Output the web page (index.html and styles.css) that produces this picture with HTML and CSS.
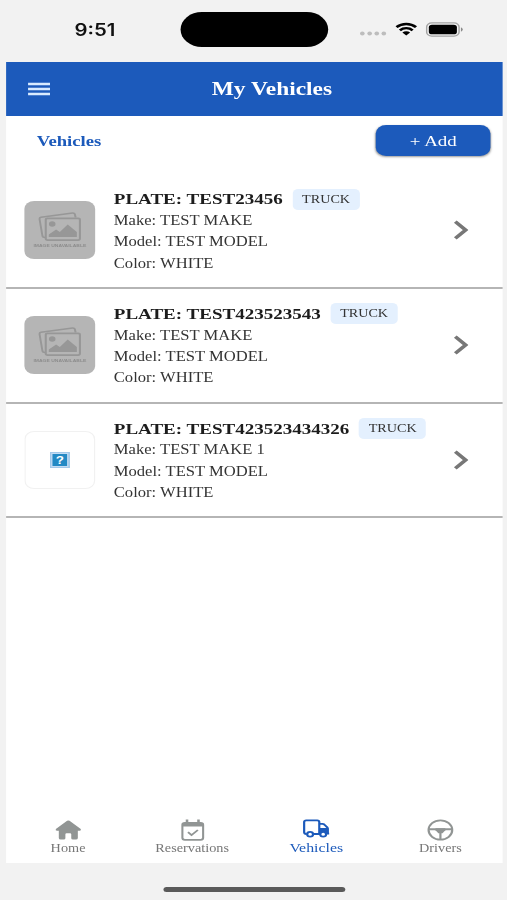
FILE: index.html
```html
<!DOCTYPE html>
<html lang="en">
<head>
  <meta charset="UTF-8">
  <meta name="viewport" content="width=device-width, initial-scale=1.0">
  <title>My Vehicles</title>
  <link rel="stylesheet" href="styles.css">
</head>
<body>
  <!-- Shared chevron and placeholder for vehicles without a photo -->
  <svg class="symbols">
    <symbol id="no-image" viewBox="0 0 58 58">
      <path d="M17 36.5 L15.9 36.2 Q15 36 14.8 35 L12.4 18 Q12.3 16.6 13.6 16.3 L39.5 12 Q41 11.9 41.3 13 L42 16.5" fill="none" stroke="#979797" stroke-width="1.6"/>
      <rect x="17.5" y="17.3" width="28" height="21.8" rx="1.5" fill="none" stroke="#979797" stroke-width="1.7"/>
      <circle cx="22.8" cy="23" r="2.7" fill="#979797"/>
      <path d="M20 36 V33.5 L26 28.5 L29 31 L35.5 23.5 L43 31 V36 Z" fill="#979797"/>
    </symbol>
    <symbol id="chevron" viewBox="0 0 12 20">
      <path d="M1.2 1.7 L9.7 10 L1.2 18.3" fill="none" stroke="#777" stroke-width="3.2"/>
    </symbol>
  </svg>

  <div class="phone">
    <div class="status-bar">
      <span class="time">9:51</span>
      <div class="island"></div>
      <div class="status-icons">
        <svg class="signal" width="22" height="5" viewBox="0 0 22 5" fill="#bdbdbd">
          <circle cx="2" cy="2.5" r="1.9"/><circle cx="8" cy="2.5" r="1.9"/><circle cx="13.8" cy="2.5" r="1.9"/><circle cx="19.6" cy="2.5" r="1.9"/>
        </svg>
        <svg class="wifi" width="18" height="14" viewBox="0 0 18 14">
          <path d="M1 5.2 A11.5 11.5 0 0 1 17 5.2 M3.8 8.3 A7.4 7.4 0 0 1 14.2 8.3" fill="none" stroke="#000" stroke-width="2.4"/>
          <path d="M9 13.6 L5.8 10.5 A4.5 4.5 0 0 1 12.2 10.5 Z"/>
        </svg>
        <svg class="battery" width="31" height="15" viewBox="0 0 31 15">
          <rect x=".7" y=".9" width="26.6" height="13.2" rx="4.2" fill="none" stroke="#a3a3a3" stroke-width="1.2"/>
          <rect x="2.5" y="2.7" width="23" height="9.6" rx="2.6"/>
          <path d="M28.8 5.2 Q30.3 6 30.3 7.5 T28.8 9.8 Z" fill="#8a8a8a"/>
        </svg>
      </div>
    </div>

    <div class="app">
      <header class="header">
        <svg class="menu-icon" width="18" height="14" viewBox="0 0 18 14" stroke="#d9ebff" stroke-width="2.5">
          <path d="M0 2 H18 M0 7 H18 M0 12 H18"/>
        </svg>
        <h1>My Vehicles</h1>
      </header>

      <div class="toolbar">
        <h2>Vehicles</h2>
        <button type="button" class="add-btn">+ Add</button>
      </div>

      <div class="vehicle-list">
        <div class="vehicle">
          <div class="thumb">
            <svg width="58" height="58"><use href="#no-image"/></svg>
            <span class="no-image-text">IMAGE UNAVAILABLE</span>
          </div>
          <div class="info">
            <div class="plate"><strong>PLATE: TEST23456</strong><span class="badge">TRUCK</span></div>
            <p>Make: TEST MAKE</p>
            <p>Model: TEST MODEL</p>
            <p>Color: WHITE</p>
          </div>
          <svg class="chevron"><use href="#chevron"/></svg>
        </div>

        <div class="vehicle">
          <div class="thumb">
            <svg width="58" height="58"><use href="#no-image"/></svg>
            <span class="no-image-text">IMAGE UNAVAILABLE</span>
          </div>
          <div class="info">
            <div class="plate"><strong>PLATE: TEST423523543</strong><span class="badge">TRUCK</span></div>
            <p>Make: TEST MAKE</p>
            <p>Model: TEST MODEL</p>
            <p>Color: WHITE</p>
          </div>
          <svg class="chevron"><use href="#chevron"/></svg>
        </div>

        <div class="vehicle">
          <div class="thumb broken"><span>?</span></div>
          <div class="info">
            <div class="plate"><strong>PLATE: TEST423523434326</strong><span class="badge">TRUCK</span></div>
            <p>Make: TEST MAKE 1</p>
            <p>Model: TEST MODEL</p>
            <p>Color: WHITE</p>
          </div>
          <svg class="chevron"><use href="#chevron"/></svg>
        </div>
      </div>

      <nav class="tabs">
        <div class="tab">
          <svg width="22" height="22" viewBox="0 0 22 22" fill="#919594">
            <path d="M11 1.4 Q11.5 1.4 12 1.8 L21.2 10 Q21.9 11.7 20.3 11.8 H18.8 V19 Q18.8 20.6 17.2 20.6 H14.8 Q13.4 20.6 13.4 19.2 V15.2 Q13.4 14.2 12.4 14.2 H9.6 Q8.6 14.2 8.6 15.2 V19.2 Q8.6 20.6 7.2 20.6 H4.8 Q3.2 20.6 3.2 19 V11.8 H1.7 Q.1 11.7 .8 10 L10 1.8 Q10.5 1.4 11 1.4 Z"/>
          </svg>
          <span>Home</span>
        </div>
        <div class="tab">
          <svg width="22" height="22" viewBox="0 0 22 22" fill="none" stroke="#919594" stroke-width="1.7">
            <rect x="2.5" y="3.8" width="17" height="17" rx="2"/>
            <path d="M2.5 4 H19.5 V7.4 H2.5 Z" fill="#919594" stroke="none"/>
            <path d="M6.3 .5 V5 M15.7 .5 V5" stroke-width="2.1"/>
            <path d="M7.1 13.1 L10 16 L15.2 11"/>
          </svg>
          <span>Reservations</span>
        </div>
        <div class="tab active">
          <svg width="22" height="22" viewBox="0 0 22 22" fill="none" stroke="#1c5abb" stroke-width="1.8">
            <path d="M3.4 15 H3 Q1.3 15 1.3 13.3 V3.1 Q1.3 1.4 3 1.4 H12 Q13.7 1.4 13.7 3.1 V15 H9"/>
            <path d="M13.7 4.9 H16.3 Q17.2 4.9 17.8 5.5 L20.2 8.3 Q20.7 9 20.7 9.8 V15" />
            <path d="M13.7 9 H21 V13.8 H22 V15.5 H13.7 Z" fill="#1c5abb" stroke="none"/>
            <circle cx="6.2" cy="15.2" r="2.4" fill="#fff"/>
            <circle cx="16.9" cy="15.2" r="2.4" fill="#fff"/>
          </svg>
          <span>Vehicles</span>
        </div>
        <div class="tab">
          <svg width="22" height="22" viewBox="0 0 22 22" fill="none" stroke="#919594" stroke-width="1.8">
            <circle cx="11" cy="11" r="9.7"/>
            <path d="M1.5 10.2 H20.5" stroke-width="2"/>
            <path d="M11 12 V20.5"/>
            <path d="M7 9.3 H15 V11.2 L12.7 14.2 H9.3 L7 11.2 Z" fill="#919594" stroke="none"/>
          </svg>
          <span>Drivers</span>
        </div>
      </nav>
    </div>

    <div class="home-indicator"></div>
  </div>
</body>
</html>
```
FILE: styles.css
```css
* {
  box-sizing: border-box;
}

body {
  margin: 0;
  height: 900px;
  overflow: hidden;
  background-color: #f2f2f2;
  font-family: "Liberation Serif", "Times New Roman", serif;
  color: #333;
}

h1, h2, p {
  margin: 0;
}

.symbols {
  display: block;
  width: 0;
  height: 0;
}

/* The screen is wider than its layout, everything stretches sideways */
.phone {
  display: flex;
  flex-direction: column;
  align-items: center;
  width: 416.8px;
  height: 900px;
  transform: scaleX(1.22);
  transform-origin: 0 0;
}

.status-bar {
  display: grid;
  grid-template-columns: 1fr 121px 1fr;
  align-items: center;
  width: 100%;
  height: 62px;
  padding-bottom: 3px;
}

.time {
  padding-left: 61px;
  font-family: Inter, "Liberation Sans", sans-serif;
  font-size: 16.7px;
  font-weight: 600;
  color: #111;
}

.island {
  height: 35px;
  border-radius: 18px;
  background: #000;
}

.status-icons {
  display: flex;
  align-items: center;
  padding-left: 26px;
}

.signal {
  margin-top: 8px;
}

.wifi {
  margin-top: -1px;
  margin-left: 7.3px;
}

.battery {
  margin-top: -1px;
  margin-left: 7.3px;
}

.app {
  display: flex;
  flex-direction: column;
  width: 407px;
  height: 801px;
  background: #fff;
}

.header {
  display: grid;
  grid-template-columns: 60px 1fr 60px;
  align-items: center;
  height: 53.5px;
  background: #1c5abb;
}

.menu-icon {
  margin-left: 18px;
}

.header h1 {
  padding-left: 29px;
  text-align: center;
  font-size: 19.2px;
  color: #fff;
}

.toolbar {
  display: flex;
  justify-content: space-between;
  align-items: center;
  height: 58.5px;
  padding: 0 9.5px 8px 25.2px;
}

.toolbar h2 {
  font-size: 15.3px;
  color: #1c5abb;
}

.add-btn {
  width: 94.5px;
  height: 31px;
  padding: 0;
  border: none;
  border-radius: 8.5px;
  background: #1c5abb;
  box-shadow: 0 1px 2px rgba(0, 0, 0, 0.4);
  font-family: inherit;
  font-size: 15.5px;
  color: #fff;
}

.vehicle {
  display: flex;
  align-items: center;
  height: 114.8px;
  padding: 0 28px 0 15.2px;
  border-bottom: 2px solid #b5b5b5;
}

.thumb {
  position: relative;
  flex: none;
  width: 58px;
  height: 58px;
  border-radius: 8px;
  background: #b5b5b5;
}

.no-image-text {
  position: absolute;
  top: 42px;
  left: 0;
  width: 100%;
  font: bold 4.1px/6px "Liberation Sans", Arial, sans-serif;
  text-align: center;
  color: #8d8d8d;
}

.broken {
  display: flex;
  justify-content: center;
  align-items: center;
  background: #fff;
  border: 1px solid #f1f1f1;
}

.broken span {
  width: 16px;
  height: 16px;
  border: 2px solid #c4dcf3;
  outline: 1px solid #a3c8e9;
  outline-offset: -1px;
  background: #2389c4;
  font: bold 11px/12px "Liberation Sans", Arial, sans-serif;
  text-align: center;
  color: #fff;
}

.info {
  flex: 1;
  margin-left: 15.2px;
  padding-top: 1.6px;
}

.plate {
  display: flex;
  align-items: center;
  height: 21.5px;
}

.plate strong {
  font-size: 15.6px;
  color: #1c1c1c;
}

.badge {
  width: 55px;
  height: 21px;
  margin-left: 8px;
  border-radius: 4.5px;
  background: #e4f0fe;
  text-align: center;
  font-size: 11.6px;
  line-height: 21px;
}

.info p {
  font-size: 13.6px;
  line-height: 21.4px;
}

.chevron {
  flex: none;
  width: 12px;
  height: 20px;
}

.tabs {
  display: grid;
  grid-template-columns: repeat(4, 1fr);
  height: 44.5px;
  margin-top: auto;
}

.tab {
  display: flex;
  flex-direction: column;
  align-items: center;
  font-size: 11.7px;
  line-height: 15px;
  color: #777;
}

.tab svg {
  flex: none;
}

.tab.active {
  font-size: 13px;
  line-height: 14px;
  color: #1c5abb;
}

.home-indicator {
  width: 149px;
  height: 5px;
  margin-top: 24px;
  border-radius: 3px;
  background: #5a5a5a;
}
```
